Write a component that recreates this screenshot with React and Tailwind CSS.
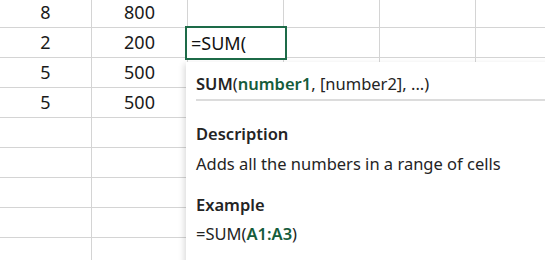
import React from "react";

const rows = [
  ["8", "800"],
  ["2", "200"],
  ["5", "500"],
  ["5", "500"],
  ["", ""],
  ["", ""],
  ["", ""],
  ["", ""],
  ["", ""],
];

export default function App() {
  return (
    <div
      className="relative w-[545px] h-[260px] overflow-hidden bg-white"
      style={{ fontFamily: '"Noto Sans", "Open Sans", sans-serif' }}
    >
      <div className="-mt-[2px] flex flex-col">
        {rows.map((r, i) => (
          <div
            key={i}
            className="grid grid-cols-[92px_96px_96px_96px_96px_96px] h-[30px] border-b border-[#d4d4d4]"
          >
            <div className="flex items-center justify-center border-r border-[#d4d4d4] text-[18px] text-[#1a1a1a]">
              {r[0]}
            </div>
            <div className="flex items-center justify-center border-r border-[#d4d4d4] text-[18px] text-[#1a1a1a]">
              {r[1]}
            </div>
            <div className="border-r border-[#d4d4d4]" />
            <div className="border-r border-[#d4d4d4]" />
            <div className="border-r border-[#d4d4d4]" />
            <div className="border-r border-[#d4d4d4]" />
          </div>
        ))}
      </div>

      {/* Active cell */}
      <div className="absolute left-[185px] top-[26px] w-[102px] h-[34px] border-[2.5px] border-[#1d6b48] bg-white flex items-center pl-[4px]">
        <span className="text-[18px] text-[#111] leading-none">=SUM(</span>
      </div>

      {/* Tooltip */}
      <div className="absolute left-[186px] top-[62px] w-[400px] h-[220px] bg-white shadow-[-2px_2px_6px_rgba(0,0,0,0.14)] pl-[10px] pt-[11px] text-[#242424]">
        <div className="text-[16.5px] leading-[22px]">
          <span className="font-semibold">SUM</span>
          <span>(</span>
          <span className="font-semibold text-[#155c3b]">number1</span>
          <span>, [number2], ...)</span>
        </div>
        <div className="mt-[4px] h-[2px] bg-[#dcdcdc]" />
        <div className="mt-[22px] text-[16.5px] leading-[22px] font-semibold">Description</div>
        <div className="mt-[8px] text-[16.5px] leading-[22px]">
          Adds all the numbers in a range of cells
        </div>
        <div className="mt-[19px] text-[16.5px] leading-[22px] font-semibold">Example</div>
        <div className="mt-[7px] text-[16.5px] leading-[22px]">
          =SUM(<span className="font-semibold text-[#155c3b]">A1:A3</span>)
        </div>
      </div>
    </div>
  );
}
